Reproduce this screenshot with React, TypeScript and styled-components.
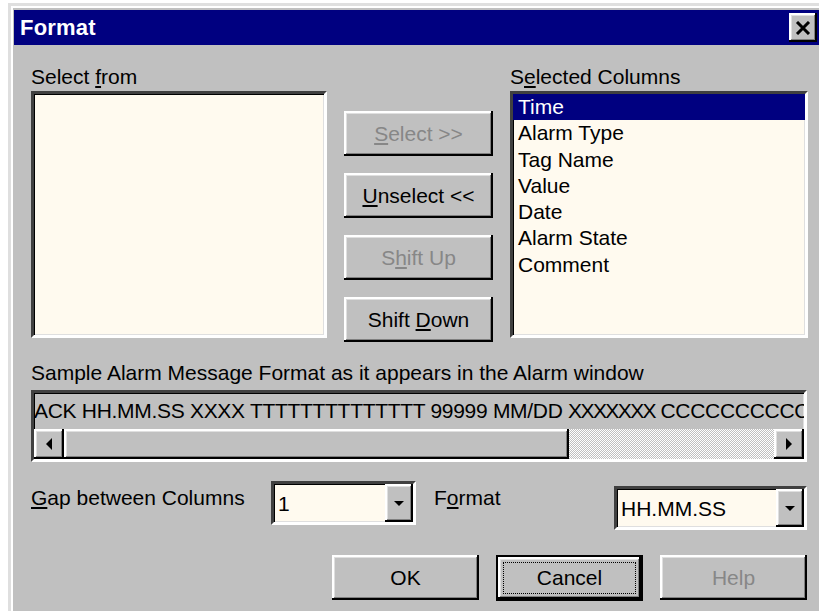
import React from 'react';
import styled, { createGlobalStyle, css } from 'styled-components';

const GlobalStyle = createGlobalStyle`
  html, body {
    margin: 0;
    padding: 0;
    background: #ffffff;
  }
  body {
    font-family: "Liberation Sans", Arial, sans-serif;
    font-size: 21px;
    color: #000;
  }
`;

const raised = css`
  background: #c0c0c0;
  box-shadow:
    inset -2px -2px 0 #000000,
    inset 2px 2px 0 #ffffff,
    inset -3px -3px 0 #808080,
    inset 3px 3px 0 #dfdfdf;
`;

const sunken = css`
  border-style: solid;
  border-width: 3px;
  border-color: #404040 #ffffff #ffffff #404040;
  box-shadow: inset 1px 1px 0 #000, inset -1px -1px 0 #dfdfdf;
`;

const Screen = styled.div`
  width: 819px;
  height: 611px;
  overflow: hidden;
  padding: 3px 0 0 8px;
  box-sizing: border-box;
`;

const Window = styled.div`
  width: 830px;
  height: 640px;
  border-top: 3px solid #dfdfdf;
  border-left: 3px solid #dfdfdf;
  box-sizing: border-box;
`;

const Frame = styled.div`
  height: 100%;
  border-top: 2px solid #ffffff;
  border-left: 2px solid #ffffff;
  padding: 2px 0 0 1px;
  background: #c0c0c0;
  box-sizing: border-box;
`;

const TitleBar = styled.div`
  width: 806px;
  height: 35px;
  background: #000080;
  display: flex;
  align-items: center;
  justify-content: space-between;
  padding: 0 3px 0 6px;
  box-sizing: border-box;
`;

const Title = styled.span`
  color: #ffffff;
  font-weight: bold;
  font-size: 22px;
  letter-spacing: 0.2px;
`;

const CloseButton = styled.div`
  ${raised};
  width: 28px;
  height: 29px;
  display: flex;
  align-items: center;
  justify-content: center;
`;

const Content = styled.div`
  padding: 20px 0 0 17px;
`;

const TopSection = styled.div`
  display: grid;
  grid-template-columns: 296px 149px 298px;
  column-gap: 17px;
`;

const Column = styled.div`
  display: flex;
  flex-direction: column;
`;

const Label = styled.div`
  height: 24px;
  line-height: 24px;
  white-space: nowrap;
`;

const ListBox = styled.div`
  ${sunken};
  margin-top: 2px;
  height: 247px;
  background: #fffaef;
  box-sizing: border-box;
  overflow: hidden;
`;

const ListItem = styled.div<{ $selected?: boolean }>`
  height: 26.3px;
  line-height: 26px;
  padding-left: 5px;
  white-space: nowrap;
  background: ${p => (p.$selected ? '#000080' : 'transparent')};
  color: ${p => (p.$selected ? '#ffffff' : '#000000')};
`;

const ButtonStack = styled.div`
  display: flex;
  flex-direction: column;
  gap: 17px;
  padding-top: 46px;
`;

const Button = styled.div<{ $disabled?: boolean; $width?: number }>`
  ${raised};
  width: ${p => (p.$width ? `${p.$width}px` : '100%')};
  height: 45px;
  display: flex;
  align-items: center;
  justify-content: center;
  box-sizing: border-box;
  color: ${p => (p.$disabled ? '#878787' : '#000000')};
  white-space: nowrap;
`;

const DefaultButton = styled.div`
  width: 147px;
  height: 46px;
  border: 2px solid #000;
  box-sizing: border-box;
  display: flex;
`;

const DefaultInner = styled.div`
  ${raised};
  flex: 1;
  padding: 5px;
  display: flex;
`;

const FocusRing = styled.div`
  flex: 1;
  border: 1px dotted #000;
  display: flex;
  align-items: center;
  justify-content: center;
`;

const SampleLabel = styled(Label)`
  margin-top: 19px;
`;

const SampleBox = styled.div`
  ${sunken};
  margin-top: 5px;
  width: 776px;
  height: 72px;
  box-sizing: border-box;
  background: #c0c0c0;
  display: flex;
  flex-direction: column;
`;

const SampleText = styled.div`
  height: 36px;
  line-height: 36px;
  white-space: nowrap;
  overflow: hidden;
  letter-spacing: -0.3px;
`;

const Tight = styled.span`
  letter-spacing: -1.6px;
`;

const ScrollBar = styled.div`
  height: 30px;
  display: flex;
`;

const ScrollArrow = styled.div`
  ${raised};
  width: 30px;
  height: 30px;
  display: flex;
  align-items: center;
  justify-content: center;
  flex-shrink: 0;
`;

const Thumb = styled.div`
  ${raised};
  width: 505px;
  height: 30px;
  flex-shrink: 0;
`;

const Track = styled.div`
  flex: 1;
  background-color: #ffffff;
  background-image: repeating-conic-gradient(#c0c0c0 0 25%, #ffffff 0 50%);
  background-size: 2px 2px;
`;

const OptionsRow = styled.div`
  margin-top: 19px;
  display: grid;
  grid-template-columns: 240px 145px 198px 193px;
  align-items: start;
`;

const RowLabel = styled.div<{ $indent?: number }>`
  padding-top: 5px;
  padding-left: ${p => p.$indent ?? 0}px;
  line-height: 24px;
  white-space: nowrap;
`;

const Combo = styled.div<{ $offset?: number }>`
  ${sunken};
  margin-top: ${p => p.$offset ?? 0}px;
  height: 44px;
  box-sizing: border-box;
  background: #fffaef;
  display: flex;
  align-items: stretch;
`;

const ComboValue = styled.div`
  flex: 1;
  padding-left: 4px;
  display: flex;
  align-items: center;
  padding-top: 2px;
`;

const ComboButton = styled.div`
  ${raised};
  width: 28px;
  display: flex;
  align-items: center;
  justify-content: center;
`;

const ActionRow = styled.div`
  margin-top: 25px;
  width: 776px;
  display: flex;
  justify-content: flex-end;
  gap: 17px;
`;

const Key = styled.span`
  text-decoration: underline;
  text-underline-offset: 2px;
`;

const Triangle = ({ dir }: { dir: 'left' | 'right' | 'down' }) => {
  const points =
    dir === 'down' ? '0,0 10,0 5,5' : dir === 'left' ? '6,0 6,12 0,6' : '0,0 0,12 6,6';
  const w = dir === 'down' ? 10 : 6;
  const h = dir === 'down' ? 5 : 12;
  return (
    <svg width={w} height={h} viewBox={`0 0 ${w} ${h}`}>
      <polygon points={points} fill="#000" />
    </svg>
  );
};

const columns = ['Time', 'Alarm Type', 'Tag Name', 'Value', 'Date', 'Alarm State', 'Comment'];

export default function App() {
  return (
    <>
      <GlobalStyle />
      <Screen>
        <Window>
          <Frame>
            <TitleBar>
              <Title>Format</Title>
              <CloseButton>
                <svg width="16" height="14" viewBox="0 0 16 14">
                  <path d="M2 1 L14 13 M14 1 L2 13" stroke="#000" strokeWidth="3" />
                </svg>
              </CloseButton>
            </TitleBar>
            <Content>
              <TopSection>
                <Column>
                  <Label>
                    Select <Key>f</Key>rom
                  </Label>
                  <ListBox />
                </Column>
                <ButtonStack>
                  <Button $disabled>
                    <span>
                      <Key>S</Key>elect &gt;&gt;
                    </span>
                  </Button>
                  <Button>
                    <span>
                      <Key>U</Key>nselect &lt;&lt;
                    </span>
                  </Button>
                  <Button $disabled>
                    <span>
                      S<Key>h</Key>ift Up
                    </span>
                  </Button>
                  <Button>
                    <span>
                      Shift <Key>D</Key>own
                    </span>
                  </Button>
                </ButtonStack>
                <Column>
                  <Label>
                    S<Key>e</Key>lected Columns
                  </Label>
                  <ListBox>
                    {columns.map((c, i) => (
                      <ListItem key={c} $selected={i === 0}>
                        {c}
                      </ListItem>
                    ))}
                  </ListBox>
                </Column>
              </TopSection>

              <SampleLabel>Sample Alarm Message Format as it appears in the Alarm window</SampleLabel>
              <SampleBox>
                <SampleText>
                  ACK HH.MM.SS XXXX TTTTTTTTTTTTTT 99999 MM/DD <Tight>XXXXXXX</Tight> CCCCCCCCCCCC
                </SampleText>
                <ScrollBar>
                  <ScrollArrow>
                    <Triangle dir="left" />
                  </ScrollArrow>
                  <Thumb />
                  <Track />
                  <ScrollArrow>
                    <Triangle dir="right" />
                  </ScrollArrow>
                </ScrollBar>
              </SampleBox>

              <OptionsRow>
                <RowLabel>
                  <Key>G</Key>ap between Columns
                </RowLabel>
                <Combo>
                  <ComboValue>1</ComboValue>
                  <ComboButton>
                    <Triangle dir="down" />
                  </ComboButton>
                </Combo>
                <RowLabel $indent={18}>
                  F<Key>o</Key>rmat
                </RowLabel>
                <Combo $offset={5}>
                  <ComboValue>HH.MM.SS</ComboValue>
                  <ComboButton>
                    <Triangle dir="down" />
                  </ComboButton>
                </Combo>
              </OptionsRow>

              <ActionRow>
                <Button $width={147}>OK</Button>
                <DefaultButton>
                  <DefaultInner>
                    <FocusRing>Cancel</FocusRing>
                  </DefaultInner>
                </DefaultButton>
                <Button $width={147} $disabled>
                  Help
                </Button>
              </ActionRow>
            </Content>
          </Frame>
        </Window>
      </Screen>
    </>
  );
}
